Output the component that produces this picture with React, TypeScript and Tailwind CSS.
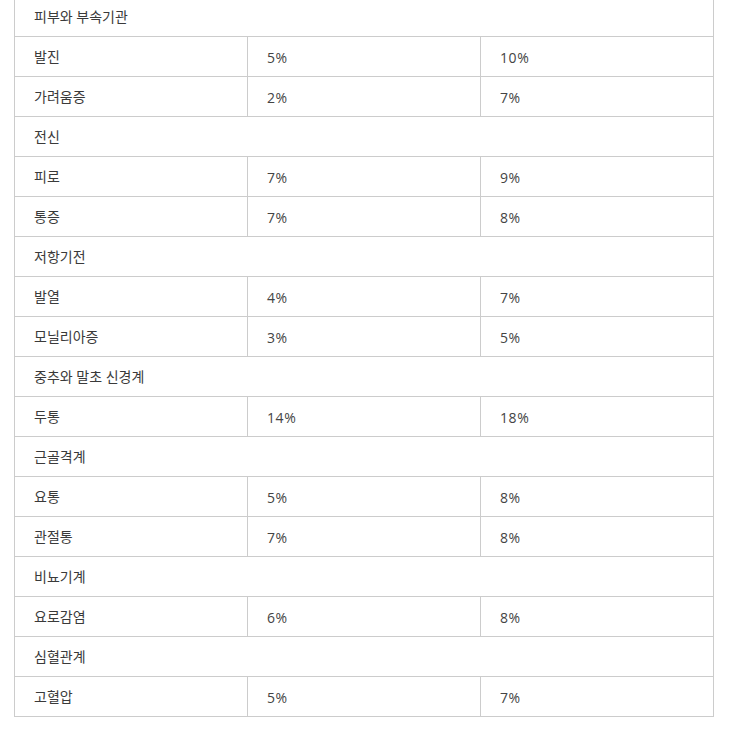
import { Fragment } from "react";

const sections: { title: string; rows: [string, string, string][] }[] = [
  { title: "피부와 부속기관", rows: [["발진", "5%", "10%"], ["가려움증", "2%", "7%"]] },
  { title: "전신", rows: [["피로", "7%", "9%"], ["통증", "7%", "8%"]] },
  { title: "저항기전", rows: [["발열", "4%", "7%"], ["모닐리아증", "3%", "5%"]] },
  { title: "중추와 말초 신경계", rows: [["두통", "14%", "18%"]] },
  { title: "근골격계", rows: [["요통", "5%", "8%"], ["관절통", "7%", "8%"]] },
  { title: "비뇨기계", rows: [["요로감염", "6%", "8%"]] },
  { title: "심혈관계", rows: [["고혈압", "5%", "7%"]] },
];

const cell = "h-[40px] border border-[#cccccc] px-[19px] py-0 align-middle";
const num = cell + " pt-[1px] tracking-[0.6px] text-[#444444]";

export default function App() {
  return (
    <div
      className="min-h-[731px] bg-white pl-[14px] text-[14px] text-[#3a3a3a]"
      style={{ fontFamily: '"Open Sans", "Noto Sans CJK KR", sans-serif' }}
    >
      <table className="-mt-[4px] w-[700px] table-fixed border-collapse">
        <tbody>
          {sections.map((s) => (
            <Fragment key={s.title}>
              <tr>
                <td colSpan={3} className={cell}>
                  {s.title}
                </td>
              </tr>
              {s.rows.map((r) => (
                <tr key={r[0]}>
                  <td className={cell}>{r[0]}</td>
                  <td className={num}>{r[1]}</td>
                  <td className={num}>{r[2]}</td>
                </tr>
              ))}
            </Fragment>
          ))}
        </tbody>
      </table>
    </div>
  );
}
